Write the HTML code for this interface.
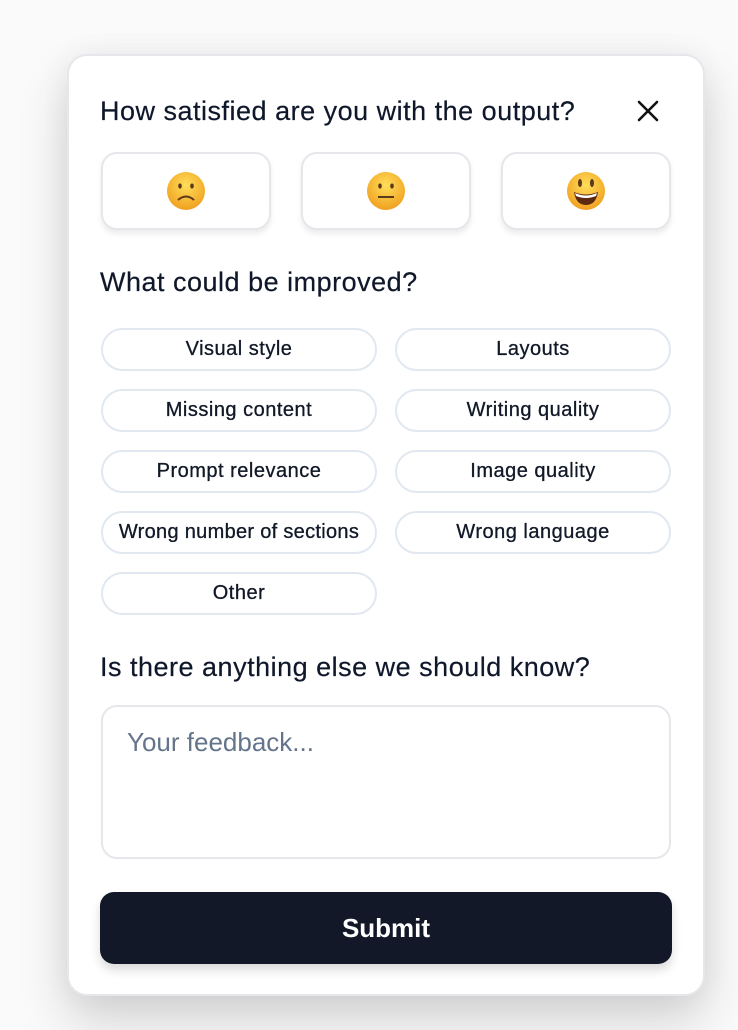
<!DOCTYPE html>
<html><head><style>
*{box-sizing:border-box;margin:0;padding:0}
body{width:738px;height:1030px;background:#fafafa;font-family:"Liberation Sans",sans-serif;color:#111827;position:relative;overflow:hidden}
.card{position:absolute;left:67px;top:54px;width:638px;height:942px;background:#fff;border:2px solid #e5e7eb;border-radius:20px;box-shadow:0 25px 50px rgba(0,0,0,0.16),0 0 30px rgba(0,0,0,0.05)}
.h{position:absolute;left:100px;font-size:27px;color:#0f172a;letter-spacing:0.5px;-webkit-text-stroke:0.2px #0f172a}
.x{position:absolute;left:636px;top:99px}
.em{position:absolute;top:152px;width:170px;height:78px;border:2px solid #e5e7eb;border-radius:16px;background:#fff;box-shadow:0 4px 6px rgba(0,0,0,0.08);display:flex;align-items:center;justify-content:center}
.chip{position:absolute;width:276px;height:43px;border:2px solid #e2e8f0;border-radius:22px;display:flex;align-items:center;justify-content:center;font-size:20px;letter-spacing:0.5px;color:#111827;-webkit-text-stroke:0.3px #111827}
.ta{position:absolute;left:101px;top:705px;width:570px;height:154px;border:2px solid #e5e7eb;border-radius:16px;padding:20px 24px;font-size:26px;color:#64748b}
.btn{position:absolute;left:100px;top:892px;width:572px;height:72px;background:#131829;border-radius:14px;color:#fff;font-size:26px;font-weight:bold;display:flex;align-items:center;justify-content:center;box-shadow:0 6px 10px rgba(0,0,0,0.15)}
</style></head><body>
<div class="card"></div>
<div class="h" style="top:96px">How satisfied are you with the output?</div>
<svg class="x" width="24" height="24" viewBox="0 0 24 24"><path d="M3 3L21 21M21 3L3 21" stroke="#111" stroke-width="2.6" stroke-linecap="round"/></svg>
<div class="em" style="left:101px"><svg width="40" height="40" viewBox="0 0 40 40"><defs><radialGradient id="g" cx="50%" cy="35%" r="65%"><stop offset="0" stop-color="#ffde5a"/><stop offset="1" stop-color="#f0a020"/></radialGradient></defs><circle cx="20" cy="20" r="19" fill="url(#g)"/><ellipse cx="14" cy="15" rx="1.8" ry="2.6" fill="#5b3a1a"/><ellipse cx="26" cy="15" rx="1.8" ry="2.6" fill="#5b3a1a"/><path d="M12 29Q20 22 28 29" stroke="#5b3a1a" stroke-width="2" fill="none"/></svg></div>
<div class="em" style="left:301px"><svg width="40" height="40" viewBox="0 0 40 40"><circle cx="20" cy="20" r="19" fill="url(#g)"/><ellipse cx="14" cy="15" rx="1.8" ry="2.6" fill="#5b3a1a"/><ellipse cx="26" cy="15" rx="1.8" ry="2.6" fill="#5b3a1a"/><path d="M12 26H28" stroke="#5b3a1a" stroke-width="2"/></svg></div>
<div class="em" style="left:501px"><svg width="40" height="40" viewBox="0 0 40 40"><circle cx="20" cy="20" r="19" fill="url(#g)"/><ellipse cx="14" cy="12" rx="2" ry="4" fill="#5b3a1a"/><ellipse cx="26" cy="12" rx="2" ry="4" fill="#5b3a1a"/><path d="M8 21Q20 26 32 21Q30 34 20 34Q10 34 8 21Z" fill="#5b2a10"/><path d="M9 22Q20 27 31 22L30 25Q20 29 10 25Z" fill="#fff"/></svg></div>
<div class="h" style="top:267px">What could be improved?</div>
<div class="chip" style="left:101px;top:328px">Visual style</div>
<div class="chip" style="left:395px;top:328px">Layouts</div>
<div class="chip" style="left:101px;top:389px">Missing content</div>
<div class="chip" style="left:395px;top:389px">Writing quality</div>
<div class="chip" style="left:101px;top:450px">Prompt relevance</div>
<div class="chip" style="left:395px;top:450px">Image quality</div>
<div class="chip" style="left:101px;top:511px;letter-spacing:0.3px">Wrong number of sections</div>
<div class="chip" style="left:395px;top:511px">Wrong language</div>
<div class="chip" style="left:101px;top:572px">Other</div>
<div class="h" style="top:652px">Is there anything else we should know?</div>
<div class="ta">Your feedback...</div>
<div class="btn">Submit</div>
</body></html>
